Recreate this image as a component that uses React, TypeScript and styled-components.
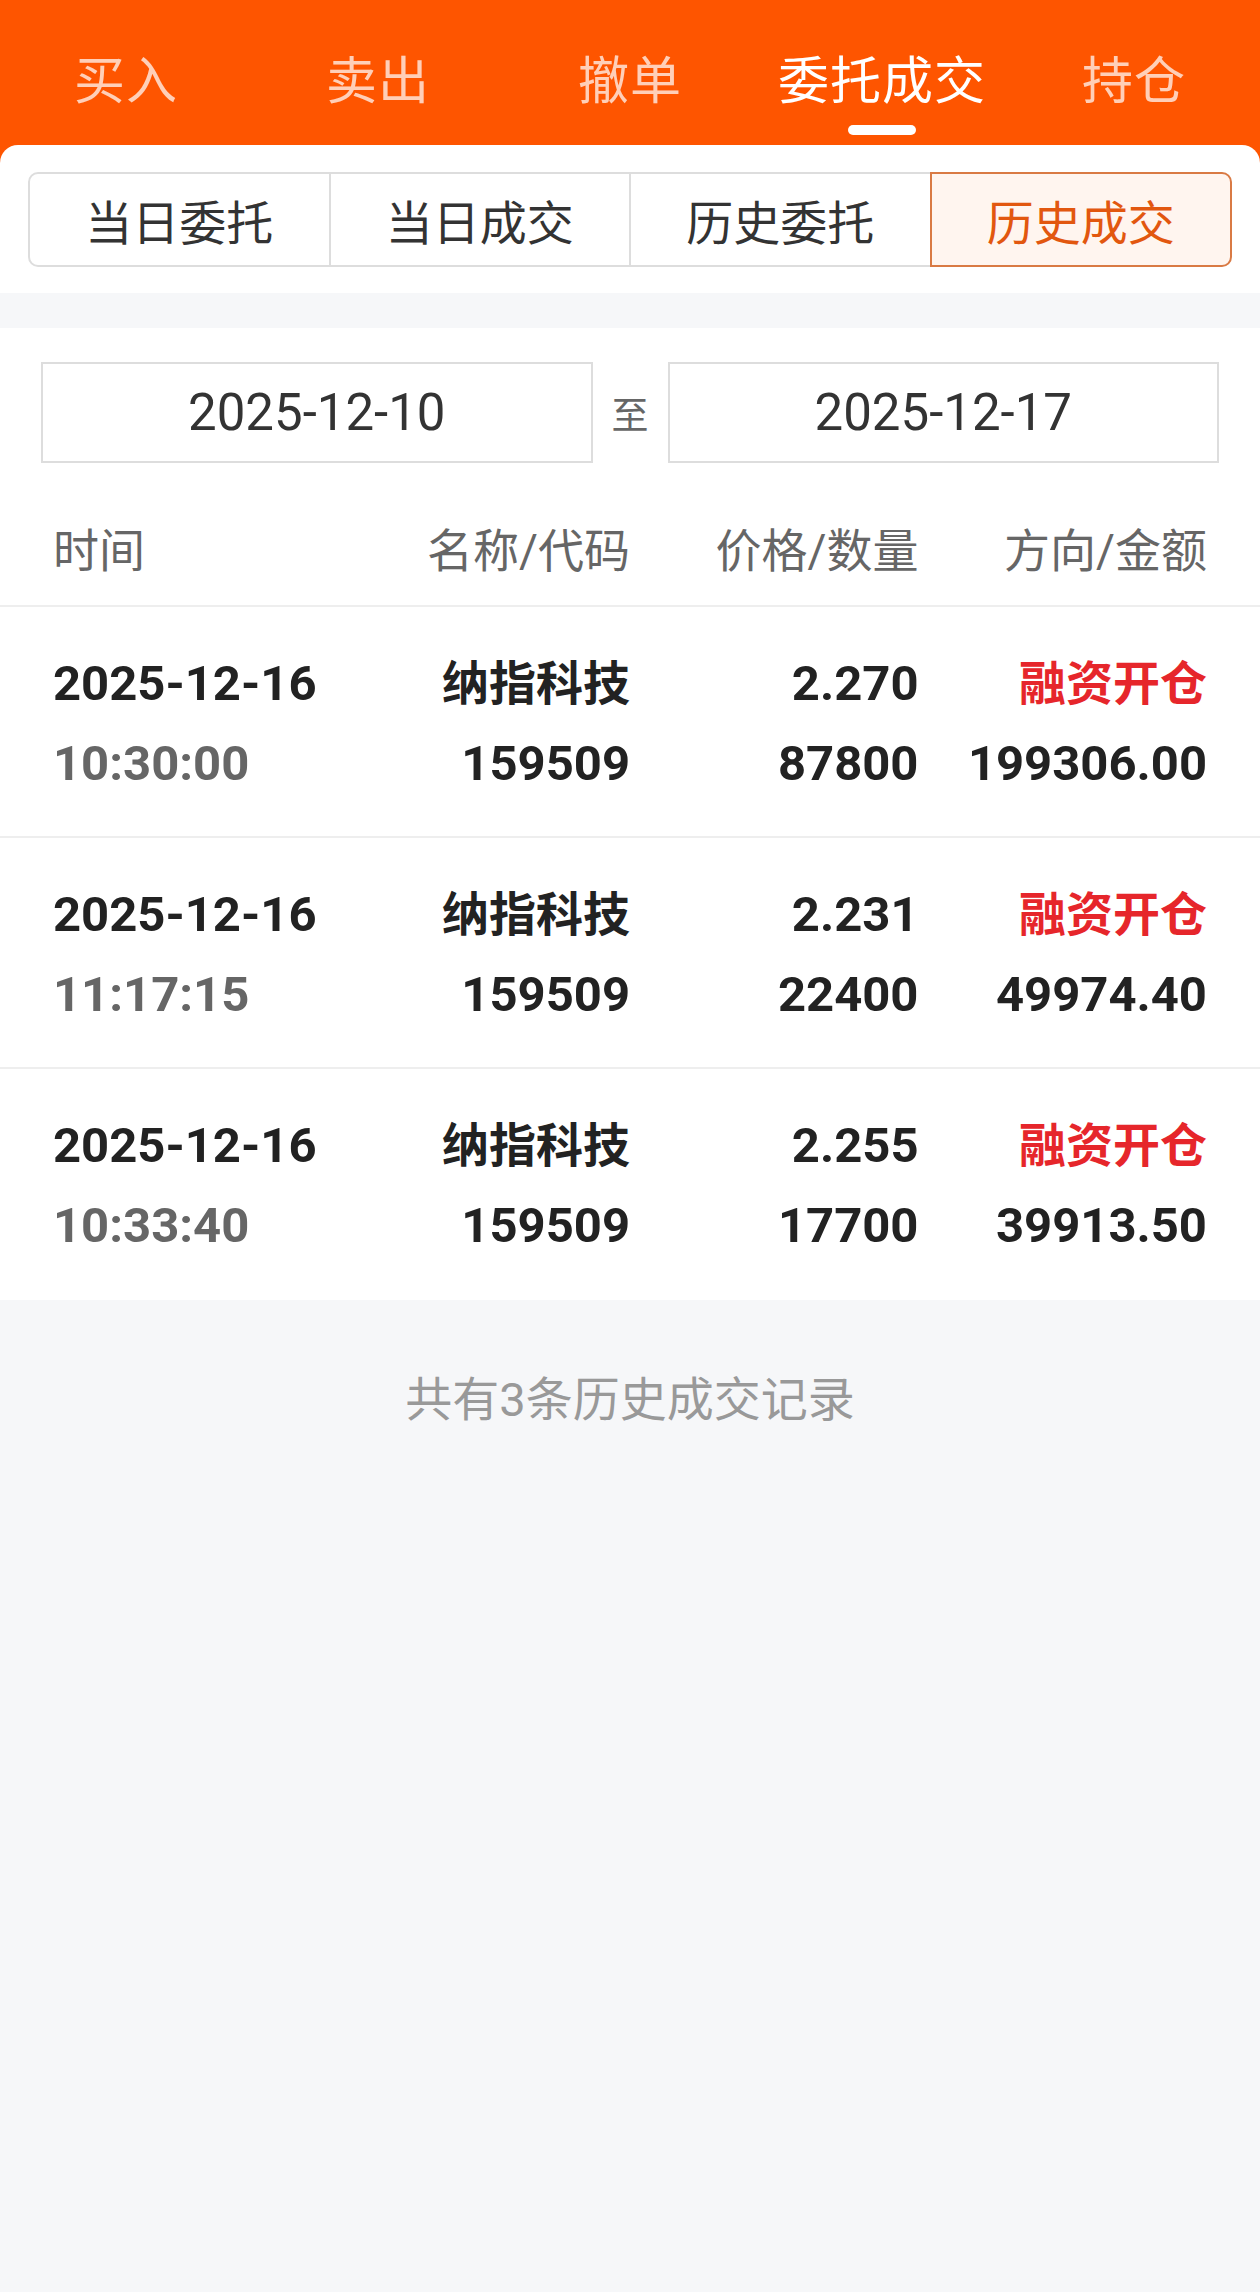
import React from 'react';
import styled, { createGlobalStyle } from 'styled-components';

const colors = {
  orange: '#fe5500',
  orangeText: '#e2570f',
  orangeBorder: '#d97a44',
  orangeSoft: '#fff5ef',
  red: '#e6262b',
  text: '#222222',
  textMid: '#333333',
  textGray: '#666666',
  textLight: '#999999',
  line: '#dddddd',
  divider: '#eeeeee',
  page: '#f6f7f9',
};

const FONT = `Roboto, "Noto Sans CJK SC", "Noto Sans", sans-serif`;

const GlobalStyle = createGlobalStyle`
  * { box-sizing: border-box; }
  html, body { margin: 0; padding: 0; }
  body {
    background: ${colors.page};
    font-family: ${FONT};
    -webkit-font-smoothing: antialiased;
  }
`;

const topTabs = ['买入', '卖出', '撤单', '委托成交', '持仓'];
const subTabs = ['当日委托', '当日成交', '历史委托', '历史成交'];

const trades = [
  { date: '2025-12-16', time: '10:30:00', name: '纳指科技', code: '159509', price: '2.270', qty: '87800', side: '融资开仓', amount: '199306.00' },
  { date: '2025-12-16', time: '11:17:15', name: '纳指科技', code: '159509', price: '2.231', qty: '22400', side: '融资开仓', amount: '49974.40' },
  { date: '2025-12-16', time: '10:33:40', name: '纳指科技', code: '159509', price: '2.255', qty: '17700', side: '融资开仓', amount: '39913.50' },
];

const App = () => {
  return (
    <>
      <GlobalStyle />
      <Page>
        <Top>
          <TabBar>
            {topTabs.map((t) => (
              <TopTab key={t} $active={t === '委托成交'}>
                <TopTabLabel>{t}</TopTabLabel>
                <Indicator $active={t === '委托成交'} />
              </TopTab>
            ))}
          </TabBar>
          <Panel>
            <Segments>
              {subTabs.map((t, i) => (
                <Segment key={t} $active={t === '历史成交'} $first={i === 0} $last={i === subTabs.length - 1}>
                  {t}
                </Segment>
              ))}
            </Segments>
          </Panel>
        </Top>

        <Section>
          <DateRow>
            <DateBox>2025-12-10</DateBox>
            <To>至</To>
            <DateBox>2025-12-17</DateBox>
          </DateRow>

          <HeadRow>
            <HeadCell>时间</HeadCell>
            <HeadCell $right>名称/代码</HeadCell>
            <HeadCell $right>价格/数量</HeadCell>
            <HeadCell $right>方向/金额</HeadCell>
          </HeadRow>

          {trades.map((r, i) => (
            <TradeRow key={i} $last={i === trades.length - 1}>
              <Cell>
                <Line>{r.date}</Line>
                <Line $gray>{r.time}</Line>
              </Cell>
              <Cell $right>
                <Line $cjk>{r.name}</Line>
                <Line>{r.code}</Line>
              </Cell>
              <Cell $right>
                <Line>{r.price}</Line>
                <Line>{r.qty}</Line>
              </Cell>
              <Cell $right>
                <Line $cjk $red>{r.side}</Line>
                <Line>{r.amount}</Line>
              </Cell>
            </TradeRow>
          ))}
        </Section>

        <Footer>共有3条历史成交记录</Footer>
      </Page>
    </>
  );
};

export default App;

const Page = styled.div`
  width: 1260px;
  min-height: 2292px;
  background: ${colors.page};
  display: flex;
  flex-direction: column;
`;

const Top = styled.div`
  background: ${colors.orange};
`;

const TabBar = styled.div`
  height: 145px;
  display: grid;
  grid-template-columns: repeat(5, 1fr);
  padding-top: 52px;
`;

const TopTab = styled.div<{ $active?: boolean }>`
  display: flex;
  flex-direction: column;
  align-items: center;
  color: ${(p) => (p.$active ? '#ffffff' : 'rgba(255, 255, 255, 0.72)')};
`;

const TopTabLabel = styled.div`
  font-size: 51px;
  line-height: 60px;
  letter-spacing: 1px;
`;

const Indicator = styled.div<{ $active?: boolean }>`
  margin-top: 13px;
  width: 68px;
  height: 10px;
  border-radius: 5px;
  background: ${(p) => (p.$active ? '#ffffff' : 'transparent')};
`;

const Panel = styled.div`
  background: #ffffff;
  border-radius: 18px 18px 0 0;
  padding: 27px 28px 26px;
`;

const Segments = styled.div`
  display: flex;
  height: 95px;
`;

const Segment = styled.div<{ $active?: boolean; $first?: boolean; $last?: boolean }>`
  flex: 1;
  display: flex;
  align-items: center;
  justify-content: center;
  margin-left: ${(p) => (p.$first ? '0' : '-2px')};
  border: 2px solid ${(p) => (p.$active ? colors.orangeBorder : colors.line)};
  border-radius: ${(p) => (p.$first ? '10px 0 0 10px' : p.$last ? '0 10px 10px 0' : '0')};
  background: ${(p) => (p.$active ? colors.orangeSoft : '#ffffff')};
  color: ${(p) => (p.$active ? colors.orangeText : colors.textMid)};
  font-size: 47px;
  position: relative;
  z-index: ${(p) => (p.$active ? 1 : 0)};
`;

const Section = styled.div`
  margin-top: 35px;
  background: #ffffff;
  padding-top: 34px;
`;

const DateRow = styled.div`
  display: flex;
  align-items: center;
  padding: 0 41px;
  height: 101px;
`;

const DateBox = styled.div`
  flex: 1;
  height: 101px;
  border: 2px solid ${colors.line};
  display: flex;
  align-items: center;
  justify-content: center;
  font-size: 51px;
  color: ${colors.textMid};
`;

const To = styled.div`
  margin: 0 19px;
  font-size: 37px;
  color: ${colors.textGray};
`;

const Grid = styled.div`
  display: grid;
  grid-template-columns: repeat(4, 1fr);
  padding: 0 53px;
`;

const HeadRow = styled(Grid)`
  padding-top: 63px;
  padding-bottom: 29px;
  border-bottom: 2px solid ${colors.divider};
`;

const HeadCell = styled.div<{ $right?: boolean }>`
  font-size: 46px;
  line-height: 50px;
  color: ${colors.textGray};
  text-align: ${(p) => (p.$right ? 'right' : 'left')};
`;

const TradeRow = styled(Grid)<{ $last?: boolean }>`
  padding-top: 37px;
  padding-bottom: 32px;
  border-bottom: 2px solid ${(p) => (p.$last ? 'transparent' : colors.divider)};
`;

const Cell = styled.div<{ $right?: boolean }>`
  display: flex;
  flex-direction: column;
  align-items: ${(p) => (p.$right ? 'flex-end' : 'flex-start')};
`;

const Line = styled.div<{ $gray?: boolean; $red?: boolean; $cjk?: boolean }>`
  height: 80px;
  line-height: 80px;
  font-weight: 700;
  white-space: nowrap;
  font-size: ${(p) => (p.$cjk ? '47px' : '49px')};
  color: ${(p) => (p.$red ? colors.red : p.$gray ? colors.textGray : colors.text)};
`;

const Footer = styled.div`
  padding-top: 70px;
  text-align: center;
  font-size: 47px;
  line-height: 60px;
  color: ${colors.textLight};
`;
